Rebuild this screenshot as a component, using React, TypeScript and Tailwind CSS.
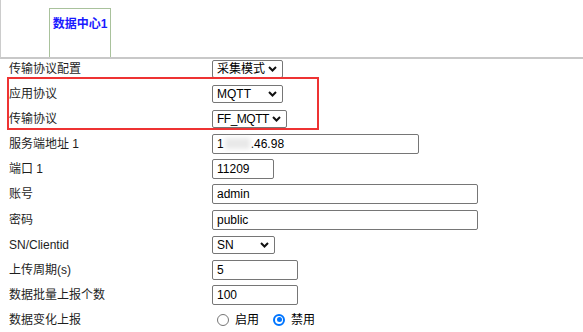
import type { ReactNode } from "react";

const font = { fontFamily: '"Liberation Sans", "Noto Sans CJK SC", sans-serif' };

function Chevron() {
  return (
    <svg width="9" height="6" viewBox="0 0 9 6" className="shrink-0">
      <path d="M1 1l3.5 3.5L8 1" fill="none" stroke="#111" strokeWidth="2" />
    </svg>
  );
}

function Select({ value, width, tight }: { value: string; width: string; tight?: boolean }) {
  return (
    <div
      className={`flex h-[18px] items-center justify-between rounded-[2px] border border-[#767676] bg-white pl-[4px] pr-[5px] text-[12px] leading-none text-black ${width}`}
    >
      <span className={tight ? "tracking-[-0.5px]" : ""}>{value}</span>
      <Chevron />
    </div>
  );
}

function Input({ children, width }: { children: ReactNode; width: string }) {
  return (
    <div
      className={`flex h-[20px] items-center rounded-[2px] border border-[#767676] bg-white pl-[4px] text-[12px] leading-none text-black ${width}`}
    >
      {children}
    </div>
  );
}

function Radio({ checked, label }: { checked?: boolean; label: string }) {
  return (
    <label className="flex items-center">
      {checked ? (
        <span className="ml-[5px] flex h-[12px] w-[12px] items-center justify-center rounded-full border-2 border-[#0075ff] bg-white">
          <span className="h-[5px] w-[5px] rounded-full bg-[#0075ff]" />
        </span>
      ) : (
        <span className="ml-[5px] h-[12px] w-[12px] rounded-full border border-[#767676] bg-white" />
      )}
      <span className="ml-[6px] text-[12px] text-black">{label}</span>
    </label>
  );
}

function Row({ label, children, h = "h-[25px]" }: { label: string; children: ReactNode; h?: string }) {
  return (
    <div className={`flex items-center ${h}`}>
      <div className="w-[212px] pl-[9px] text-[12px] text-[#1e1e1e]">{label}</div>
      <div className="flex items-center">{children}</div>
    </div>
  );
}

export default function App() {
  return (
    <div className="relative h-[332px] w-[583px] overflow-hidden bg-white" style={font}>
      <div className="flex h-[59px] items-end border-b-2 border-l border-[#cccccc] border-b-[#c8c8c8] pl-[48px]">
        <div className="flex h-[49px] w-[62px] justify-center border border-b-0 border-[#a9c29c] pt-[8px] text-[12px] font-bold leading-[14px] text-[#1a1aff]">
          数据中心1
        </div>
      </div>

      <div className="flex flex-col">
        <Row label="传输协议配置" h="h-[22px] pb-[3px]">
          <Select value="采集模式" width="w-[71px]" />
        </Row>
        <Row label="应用协议">
          <Select value="MQTT" width="w-[71px]" />
        </Row>
        <Row label="传输协议">
          <Select value="FF_MQTT" width="w-[75px]" tight />
        </Row>
        <Row label="服务端地址 1">
          <Input width="w-[207px]">
            <span>1</span>
            <span className="mx-[1px] inline-block h-[11px] w-[25px] bg-[#e9e9e9] blur-[2px]" />
            <span>.46.98</span>
          </Input>
        </Row>
        <Row label="端口 1">
          <Input width="w-[62px]">11209</Input>
        </Row>
        <Row label="账号" h="h-[26px]">
          <Input width="w-[266px]">admin</Input>
        </Row>
        <Row label="密码">
          <Input width="w-[266px]">public</Input>
        </Row>
        <Row label="SN/Clientid">
          <Select value="SN" width="w-[63px]" />
        </Row>
        <Row label="上传周期(s)">
          <Input width="w-[86px]">5</Input>
        </Row>
        <Row label="数据批量上报个数">
          <Input width="w-[86px]">100</Input>
        </Row>
        <Row label="数据变化上报">
          <Radio label="启用" />
          <span className="w-[9px]" />
          <Radio checked label="禁用" />
        </Row>
      </div>

      <div className="pointer-events-none absolute left-[7px] top-[77px] h-[53px] w-[312px] border-2 border-[#ee3333]" />
    </div>
  );
}
